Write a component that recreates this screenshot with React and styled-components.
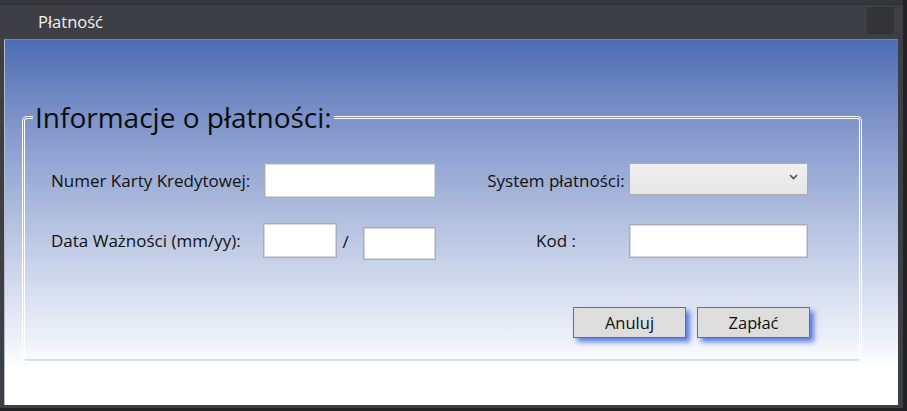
import styled, { createGlobalStyle } from "styled-components";

const GlobalStyle = createGlobalStyle`
  html, body {
    margin: 0;
    padding: 0;
    background: #232326;
  }
  body {
    font-family: "Open Sans", "Noto Sans", sans-serif;
  }
`;

function ChevronDown() {
  return (
    <svg width="9" height="6" viewBox="0 0 9 6">
      <path d="M1 1 L4.5 4.5 L8 1" fill="none" stroke="#505050" strokeWidth="1.6" />
    </svg>
  );
}

export default function App() {
  return (
    <Screen>
      <GlobalStyle />
      <Window>
        <TitleBar>
          <Title>Płatność</Title>
          <CloseBox />
        </TitleBar>
        <Content>
          <GroupBox>
            <Legend>Informacje o płatności:</Legend>
            <FormGrid>
              <Label>Numer Karty Kredytowej:</Label>
              <TextBox $w={172} $h={35} />
              <Label $col={4} $center>System płatności:</Label>
              <Select>
                <ChevronDown />
              </Select>

              <Label>Data Ważności (mm/yy):</Label>
              <DateRow>
                <TextBox $w={74} $h={35} />
                <Slash>/</Slash>
                <TextBox $w={73} $h={33} $shift={3} />
              </DateRow>
              <Label $col={4} $center>Kod :</Label>
              <TextBox $w={179} $h={34} />
            </FormGrid>
            <ButtonRow>
              <Button>Anuluj</Button>
              <Button>Zapłać</Button>
            </ButtonRow>
          </GroupBox>
        </Content>
      </Window>
    </Screen>
  );
}

const Screen = styled.div`
  width: 907px;
  height: 411px;
  background: #232326;
  overflow: hidden;
`;

const Window = styled.div`
  width: 903px;
  height: 408px;
  background: #3e3f44;
  border-top: 4px solid #35363a;
  box-sizing: border-box;
  display: flex;
  flex-direction: column;
`;

const TitleBar = styled.div`
  height: 35px;
  display: flex;
  align-items: center;
  justify-content: space-between;
  padding: 0 9px 0 38px;
  border-top: 1px solid #2f3034;
  box-sizing: border-box;
`;

const Title = styled.span`
  color: #f2f2f2;
  font-size: 16.5px;
  margin-top: -1px;
`;

const CloseBox = styled.div`
  width: 27px;
  height: 27px;
  background: #333338;
  margin-top: -3px;
`;

const Content = styled.div`
  margin: 0 5px 0 4px;
  height: 366px;
  border-left: 1px solid #b4bccb;
  border-top: 1px solid #6c84bf;
  box-sizing: border-box;
  background: linear-gradient(
    to bottom,
    #4f6db4 0%,
    #8ea1d1 30%,
    #c2cde6 58%,
    #eef1f9 82%,
    #ffffff 90%
  );
  padding: 59px 36px 0 17px;
`;

const GroupBox = styled.fieldset`
  margin: 0;
  height: 262px;
  box-sizing: border-box;
  padding: 0;
  border: 3px double #ffffff;
  border-bottom: 2px solid #d9dfe7;
  border-radius: 5px;
  display: flex;
  flex-direction: column;
`;

const Legend = styled.legend`
  margin-left: 8px;
  padding: 0 2px;
  font-size: 28px;
  line-height: 36px;
  color: #0c0c0c;
`;

const FormGrid = styled.div`
  display: grid;
  grid-template-columns: 213px 172px 47px 146px 179px;
  grid-auto-rows: 35px;
  row-gap: 25px;
  align-items: center;
  margin: 28px 0 0 26px;
`;

const Label = styled.div`
  grid-column: ${(p) => p.$col || "auto"};
  font-size: 17px;
  color: #111;
  white-space: nowrap;
  text-align: ${(p) => (p.$center ? "center" : "left")};
`;

const TextBox = styled.div`
  width: ${(p) => p.$w}px;
  height: ${(p) => p.$h}px;
  box-sizing: border-box;
  background: #ffffff;
  border: 1px solid #a9acb2;
  box-shadow: inset 0 0 0 1px #d6d8dc;
  margin-top: ${(p) => (p.$shift ? p.$shift * 2 : 0)}px;
`;

const DateRow = styled.div`
  display: flex;
  align-items: center;
  margin-left: -1px;
`;

const Slash = styled.span`
  width: 27px;
  box-sizing: border-box;
  padding-left: 6px;
  font-size: 17px;
  color: #111;
  margin-top: 2px;
`;

const Select = styled.div`
  width: 179px;
  height: 32px;
  box-sizing: border-box;
  border: 1px solid #acacac;
  background: linear-gradient(to bottom, #f0f0f0, #e5e5e5);
  display: flex;
  align-items: center;
  justify-content: flex-end;
  padding: 0 9px 4px 0;
  margin-top: -4px;
`;

const ButtonRow = styled.div`
  display: flex;
  justify-content: flex-end;
  gap: 11px;
  margin: 49px 49px 0 0;
`;

const Button = styled.button`
  width: 113px;
  height: 31px;
  box-sizing: border-box;
  background: #dddddd;
  border: 1px solid #707070;
  font-family: "Open Sans", "Noto Sans", sans-serif;
  font-size: 16.5px;
  color: #111;
  padding: 0;
  box-shadow: 4px 4px 5px rgba(70, 105, 220, 0.85);
`;
